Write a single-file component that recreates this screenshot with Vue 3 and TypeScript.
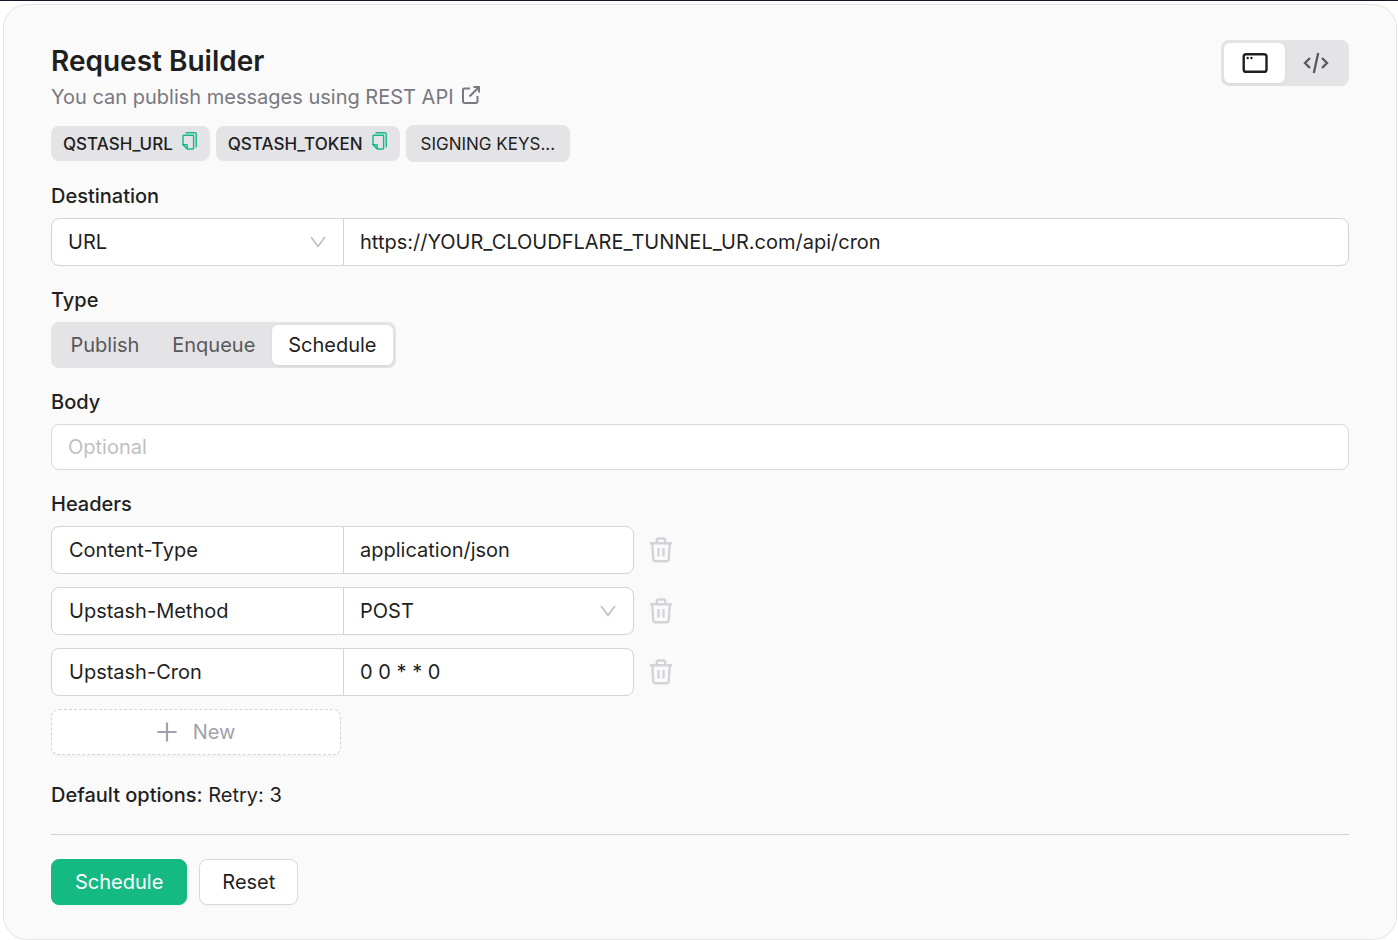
<script setup lang="ts">
import { ref } from 'vue'

interface HeaderRow {
  id: number
  name: string
  value: string
  options?: string[]
}

const view = ref<'form' | 'code'>('form')
const destination = ref('URL')
const url = ref('https://YOUR_CLOUDFLARE_TUNNEL_UR.com/api/cron')
const types = ['Publish', 'Enqueue', 'Schedule']
const type = ref('Schedule')
const body = ref('')
const envKeys = ['QSTASH_URL', 'QSTASH_TOKEN']

const initialHeaders = (): HeaderRow[] => [
  { id: 1, name: 'Content-Type', value: 'application/json' },
  { id: 2, name: 'Upstash-Method', value: 'POST', options: ['GET', 'POST', 'PUT', 'PATCH', 'DELETE'] },
  { id: 3, name: 'Upstash-Cron', value: '0 0 * * 0' },
]
const headers = ref<HeaderRow[]>(initialHeaders())
let nextId = 4

function addHeader() {
  headers.value.push({ id: nextId++, name: '', value: '' })
}
function removeHeader(id: number) {
  headers.value = headers.value.filter((h) => h.id !== id)
}
function reset() {
  url.value = ''
  body.value = ''
  headers.value = initialHeaders()
}
</script>

<template>
  <div class="page">
    <main class="card">
      <header class="top">
        <div class="intro">
          <h1>Request Builder</h1>
          <p>
            You can publish messages using
            <a href="#rest-api">REST API<svg class="external" viewBox="0 0 18 18" aria-hidden="true"><path d="M8 2.5H2.4Q1 2.5 1 3.9V15.6Q1 17 2.4 17H14.1Q15.5 17 15.5 15.6V10M11.5 1H17V6.5M16.8 1.2L7.5 10.5" /></svg></a>
          </p>
        </div>
        <div class="segmented" role="group" aria-label="View">
          <button type="button" class="icon-item" :class="{ active: view === 'form' }" aria-label="Form view" @click="view = 'form'">
            <svg class="window" viewBox="0 0 26 20" aria-hidden="true">
              <rect x="1.7" y="1.2" width="22.8" height="17.6" rx="2.4" />
              <circle cx="5.7" cy="5" r="1.2" /><circle cx="9.4" cy="5" r="1.2" />
            </svg>
          </button>
          <button type="button" class="icon-item" :class="{ active: view === 'code' }" aria-label="Code view" @click="view = 'code'">
            <svg class="code" viewBox="0 0 26 24" aria-hidden="true"><path d="M7 7L2 12L7 17M19 7L24 12L19 17M15.2 2L10.8 22" /></svg>
          </button>
        </div>
      </header>

      <div class="chips">
        <button v-for="key in envKeys" :key="key" type="button" class="chip">
          {{ key }}
          <svg class="copy" viewBox="0 0 15 18" aria-hidden="true">
            <path d="M3.5 .8H13.3Q14.2 .8 14.2 1.7V15.5" />
            <path d="M1 12.5V4Q1 3.3 1.7 3.3H10.9Q11.6 3.3 11.6 4V16.3Q11.6 17 10.9 17H5.2L1 12.8H4.5Q5.2 12.8 5.2 13.5V17" />
          </svg>
        </button>
        <button type="button" class="chip signing">SIGNING KEYS...</button>
      </div>

      <form @submit.prevent>
        <section class="field">
          <label for="url">Destination</label>
          <div class="group">
            <div class="cell key select-cell">
              <select v-model="destination" aria-label="Destination kind">
                <option>URL</option>
                <option>URL Group</option>
              </select>
              <svg class="chevron" viewBox="0 0 16 12" aria-hidden="true"><path d="M1 1L8 10.5L15 1" /></svg>
            </div>
            <div class="cell"><input id="url" v-model="url" type="text" /></div>
          </div>
        </section>

        <section class="field">
          <span id="type-label" class="label">Type</span>
          <div class="segmented types" role="group" aria-labelledby="type-label">
            <button v-for="t in types" :key="t" type="button" :class="{ active: type === t }" @click="type = t">{{ t }}</button>
          </div>
        </section>

        <section class="field">
          <label for="body">Body</label>
          <input id="body" v-model="body" class="body" type="text" placeholder="Optional" />
        </section>

        <section class="field">
          <span class="label">Headers</span>
          <div class="rows">
            <div v-for="h in headers" :key="h.id" class="row">
              <div class="group pair">
                <div class="cell key"><input v-model="h.name" class="name" type="text" aria-label="Header name" /></div>
                <div v-if="h.options" class="cell select-cell">
                  <select v-model="h.value" aria-label="Header value">
                    <option v-for="o in h.options" :key="o">{{ o }}</option>
                  </select>
                  <svg class="chevron" viewBox="0 0 16 12" aria-hidden="true"><path d="M1 1L8 10.5L15 1" /></svg>
                </div>
                <div v-else class="cell"><input v-model="h.value" type="text" aria-label="Header value" /></div>
              </div>
              <button type="button" class="trash" aria-label="Remove header" @click="removeHeader(h.id)">
                <svg viewBox="0 0 22 26" aria-hidden="true">
                  <path d="M0 6.3H22M6.8 6V3.2Q6.8 1.5 8.500 1.500H13.500Q15.200 1.500 15.200 3.200V6M2.300 6.500L3.200 22Q3.300 24.300 5.600 24.300H16.400Q18.700 24.300 18.800 22L19.700 6.500M8.500 11V19.500M13.500 11V19.500" />
                </svg>
              </button>
            </div>
            <button type="button" class="new" @click="addHeader">
              <svg viewBox="0 0 20 20" aria-hidden="true"><path d="M10 .5V19.5M.5 10H19.5" /></svg>New
            </button>
          </div>
        </section>

        <p class="defaults"><strong>Default options:</strong> Retry: 3</p>

        <footer class="actions">
          <button type="submit" class="primary">Schedule</button>
          <button type="button" class="secondary" @click="reset">Reset</button>
        </footer>
      </form>
    </main>
  </div>
</template>

<style>
body {
  margin: 0;
  background: #fff;
}
</style>

<style scoped>
.page {
  border-top: 1px solid #1b1527;
  padding: 3px 1px 0 3px;
  font-family: Inter, "Liberation Sans", sans-serif;
  font-size: 20px;
  line-height: 28px;
  color: #1f1f1f;
}
.page *,
.page {
  box-sizing: border-box;
}
svg {
  fill: none;
  stroke: currentColor;
  stroke-width: 2;
  flex: none;
}
button,
input,
select {
  font: inherit;
  color: inherit;
  margin: 0;
  padding: 0;
  border: 0;
  background: none;
}
button {
  cursor: pointer;
}
.card {
  background: #fafafa;
  border: 1px solid #e4e4e7;
  border-radius: 24px;
  padding: 35px 47px 34px;
}
.top {
  display: flex;
  justify-content: space-between;
  align-items: flex-start;
}
h1 {
  margin: 0;
  font-size: 28px;
  line-height: 42px;
  font-weight: 600;
}
.intro p {
  margin: 0;
  line-height: 30px;
  color: #78787f;
}
.intro a {
  color: inherit;
  text-decoration: none;
}
.external {
  width: 18px;
  height: 18px;
  margin-left: 8px;
}
.segmented {
  display: flex;
  width: fit-content;
  height: 46px;
  padding: 3px;
  border-radius: 8px;
  background: #e4e4e7;
}
.segmented button {
  flex: 1 1 auto;
  padding: 0 16px;
  border-radius: 6px;
  color: #58585b;
}
.types {
  width: 345px;
}
.segmented .active {
  background: #fff;
  color: #1f1f1f;
  box-shadow: 0 1px 2px rgba(0, 0, 0, 0.03), 0 2px 6px rgba(0, 0, 0, 0.03);
}
.segmented .icon-item {
  display: flex;
  width: 61px;
  padding: 0;
  align-items: center;
  justify-content: center;
}
.window {
  width: 26px;
  height: 20px;
  stroke-width: 2.4;
}
.window circle {
  fill: currentColor;
  stroke: none;
}
.code {
  width: 26px;
  height: 24px;
  stroke-width: 2.3;
}
.chips {
  display: flex;
  align-items: center;
  gap: 6px;
  margin-top: 13px;
}
.chip {
  display: flex;
  align-items: center;
  height: 35px;
  padding: 0 13px 0 12px;
  gap: 9px;
  border-radius: 8px;
  background: #e4e4e7;
  font-size: 17px;
  font-weight: 500;
}
.chip.signing {
  height: 37px;
  padding: 0 15px;
  font-weight: 400;
}
.copy {
  width: 15px;
  height: 18px;
  margin-bottom: 6px;
  color: #15ba82;
  stroke-width: 1.4;
}
form {
  margin-top: 20px;
}
.field {
  margin-bottom: 20px;
}
label,
.label {
  display: block;
  margin-bottom: 8px;
  font-weight: 500;
}
.group {
  display: flex;
  height: 48px;
  border: 1px solid #d4d4d8;
  border-radius: 8px;
  background: #fff;
  overflow: hidden;
}
.cell {
  position: relative;
  flex: 1;
  min-width: 0;
}
.cell.key {
  flex: 0 0 291px;
}
.cell + .cell {
  border-left: 1px solid #d4d4d8;
}
.cell input,
.cell select {
  display: block;
  width: 100%;
  height: 100%;
  padding: 0 16px;
}
.cell .name {
  padding: 0 17px;
}
.cell select {
  appearance: none;
}
.chevron {
  position: absolute;
  right: 17px;
  top: 50%;
  width: 16px;
  height: 12px;
  transform: translateY(-50%);
  color: #bfbfbf;
  stroke-width: 1.6;
  pointer-events: none;
}
.body {
  display: block;
  width: 100%;
  height: 46px;
  padding: 0 16px;
  border: 1px solid #d9d9d9;
  border-radius: 8px;
  background: #fff;
}
.body::placeholder {
  color: #bfbfbf;
  opacity: 1;
}
.rows {
  display: flex;
  flex-direction: column;
  gap: 13px;
}
.row {
  display: flex;
  align-items: center;
  gap: 16px;
}
.pair {
  flex: 0 1 583px;
}
.trash {
  display: flex;
  color: #d4d4d8;
}
.trash svg {
  width: 22px;
  height: 26px;
  stroke-width: 2.4;
}
.new {
  display: flex;
  align-items: center;
  justify-content: center;
  gap: 16px;
  width: 290px;
  height: 46px;
  border: 1px dashed #d4d4d4;
  border-radius: 8px;
  background: #fff;
  color: #a1a1aa;
  box-shadow: 0 2px 0 rgba(0, 0, 0, 0.02);
}
.new svg {
  width: 20px;
  height: 20px;
  stroke-width: 2.2;
}
.defaults {
  margin: 26px 0 0;
}
.defaults strong {
  font-weight: 500;
}
.actions {
  display: flex;
  gap: 12px;
  margin-top: 25px;
  padding-top: 24px;
  border-top: 1px solid #d4d4d4;
}
.actions button {
  height: 46px;
  padding: 0 22px;
  border: 1px solid #d9d9d9;
  border-radius: 8px;
  background: #fff;
  box-shadow: 0 2px 0 rgba(0, 0, 0, 0.02);
}
.actions .primary {
  padding: 0 23px;
  border-color: #15ba82;
  background: #15ba82;
  color: #fff;
  box-shadow: 0 2px 0 rgba(5, 255, 130, 0.06);
}
</style>
